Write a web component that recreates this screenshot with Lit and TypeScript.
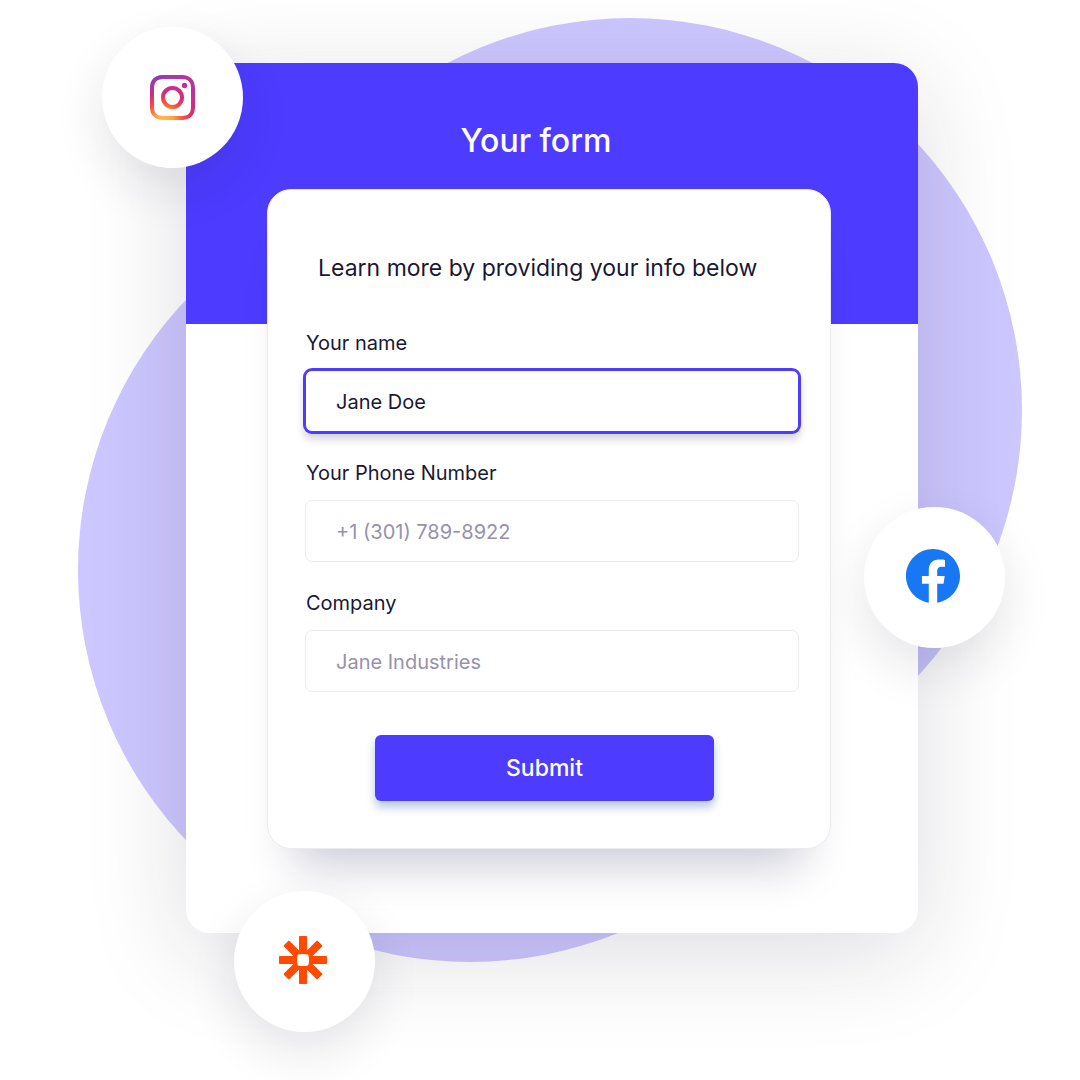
import { LitElement, html, css, svg } from "lit";
import { customElement, property } from "lit/decorators.js";
import { classMap } from "lit/directives/class-map.js";

interface Field {
  id: string;
  label: string;
  type: string;
  value: string;
  placeholder: string;
  active: boolean;
}

const FIELDS: Field[] = [
  { id: "name", label: "Your name", type: "text", value: "Jane Doe", placeholder: "", active: true },
  { id: "phone", label: "Your Phone Number", type: "tel", value: "", placeholder: "+1 (301) 789-8922", active: false },
  { id: "company", label: "Company", type: "text", value: "", placeholder: "Jane Industries", active: false },
];

const instagram = svg`
  <svg width="45" height="45" viewBox="0 0 45 45" aria-hidden="true">
    <defs>
      <radialGradient id="warm" gradientUnits="userSpaceOnUse" cx="14" cy="47" r="47">
        <stop offset="0" stop-color="#ffc04c"></stop>
        <stop offset="0.2" stop-color="#ffa545"></stop>
        <stop offset="0.42" stop-color="#f4503f"></stop>
        <stop offset="0.62" stop-color="#dc2b72"></stop>
        <stop offset="1" stop-color="#b434a4"></stop>
      </radialGradient>
      <radialGradient id="cool" gradientUnits="userSpaceOnUse" cx="4" cy="-3" r="28">
        <stop offset="0" stop-color="#7a43b8"></stop>
        <stop offset="1" stop-color="#9a3ab4" stop-opacity="0"></stop>
      </radialGradient>
      <g id="camera">
        <path fill-rule="evenodd" d="M13 0H32C40 0 45 5 45 13V32C45 40 40 45 32 45H13C5 45 0 40 0 32V13C0 5 5 0 13 0ZM13 4C7 4 4 7 4 13V32C4 38 7 41 13 41H32C38 41 41 38 41 32V13C41 7 38 4 32 4Z"></path>
        <path fill-rule="evenodd" d="M22.500 11a11.500 11.500 0 1 0 0 23a11.500 11.500 0 0 0 0-23ZM22.500 15a7.500 7.500 0 1 1 0 15a7.500 7.500 0 0 1 0-15Z"></path>
        <circle cx="34.500" cy="10.500" r="2.700"></circle>
      </g>
    </defs>
    <use href="#camera" fill="url(#warm)"></use>
    <use href="#camera" fill="url(#cool)"></use>
  </svg>`;

const facebook = svg`
  <svg width="54" height="54" viewBox="0 0 24 24" aria-hidden="true">
    <path fill="#1877f2" d="M24 12c0-6.627-5.373-12-12-12S0 5.373 0 12c0 5.990 4.388 10.954 10.125 11.854v-8.385H7.078v-3.470h3.047V9.356c0-3.007 1.792-4.669 4.533-4.669 1.312 0 2.686.235 2.686.235v2.953H15.830c-1.491 0-1.956.925-1.956 1.874v2.250h3.328l-.532 3.470h-2.796v8.385C19.612 22.954 24 17.990 24 12z"></path>
  </svg>`;

const zapier = svg`
  <svg width="48" height="48" viewBox="0 0 48 48" aria-hidden="true">
    <g fill="#ff4a00">
      <rect x="20" y="0" width="8" height="48" rx="1"></rect>
      <rect x="0" y="20" width="48" height="8" rx="1"></rect>
      <rect x="20" y="0" width="8" height="48" rx="1" transform="rotate(45 24 24)"></rect>
      <rect x="20" y="0" width="8" height="48" rx="1" transform="rotate(-45 24 24)"></rect>
    </g>
    <path fill="#fff" d="M24 18c2 0 3.600.200 4.800.600.300 0 .500.300.600.600.400 1.200.600 2.800.600 4.800s-.200 3.600-.600 4.800c-.100.300-.300.500-.600.600-1.200.400-2.800.600-4.800.600s-3.600-.200-4.800-.600c-.300-.100-.500-.300-.600-.600-.400-1.200-.600-2.800-.600-4.800s.200-3.600.600-4.800c.100-.300.300-.500.600-.600 1.200-.400 2.800-.600 4.800-.600z"></path>
  </svg>`;

@customElement("form-field")
class FormField extends LitElement {
  @property({ attribute: false }) field!: Field;

  static styles = css`
    :host {
      display: block;
    }
    .field {
      display: flex;
      flex-direction: column;
      gap: 13px;
    }
    .label {
      padding-left: 1px;
      font-size: 20px;
      line-height: 28px;
      color: #1b1833;
    }
    .input {
      box-sizing: border-box;
      width: 100%;
      height: 62px;
      padding: 2px 30px 0;
      border: 1px solid #ececee;
      border-radius: 7px;
      outline: none;
      background: #fff;
      font: inherit;
      font-size: 20px;
      color: #1b1833;
    }
    .input::placeholder {
      color: #9692ac;
      opacity: 1;
    }
    .active {
      border-color: #4d3bff;
      box-shadow: 0 0 0 2px #4d3bff, 0 6px 8px 1px rgba(27, 24, 80, 0.2);
    }
  `;

  render() {
    const f = this.field;
    return html`
      <div class="field">
        <label class="label" for=${f.id}>${f.label}</label>
        <input
          class=${classMap({ input: true, active: f.active })}
          id=${f.id}
          type=${f.type}
          .value=${f.value}
          placeholder=${f.placeholder}
        />
      </div>
    `;
  }
}

@customElement("app-root")
class AppRoot extends LitElement {
  static styles = css`
    :host {
      display: block;
      font-family: Inter, "Liberation Sans", sans-serif;
      font-weight: 400;
    }
    .scene {
      box-sizing: border-box;
      display: flex;
      justify-content: center;
      min-height: 100vh;
      padding: 63px 0 147px 24px;
      overflow: hidden;
      background: #fff;
    }
    .stage {
      position: relative;
      isolation: isolate;
      width: 100%;
      max-width: 732px;
    }
    .disc {
      position: absolute;
      z-index: -1;
      width: 784px;
      height: 784px;
      border-radius: 50%;
      background: #cdc7ff;
    }
    .disc-upper {
      top: -45px;
      right: -104px;
    }
    .disc-lower {
      top: 115px;
      left: -108px;
    }
    .panel {
      box-sizing: border-box;
      padding: 56px 87px 84px 81px;
      border-radius: 24px;
      background: linear-gradient(#4d3bff 261px, #fff 261px);
      box-shadow: 0 20px 100px rgba(27, 24, 51, 0.15);
    }
    .title {
      margin: 0 0 26px;
      padding-right: 26px;
      font-size: 32px;
      font-weight: 500;
      line-height: 44px;
      text-align: center;
      color: #fff;
    }
    .card {
      display: flex;
      flex-direction: column;
      padding: 62px 31px 47px 37px;
      border: 1px solid #ececee;
      border-radius: 24px;
      background: #fff;
      box-shadow: 0 42px 44px -28px rgba(27, 24, 80, 0.24);
    }
    .intro {
      margin: 0 0 45px;
      padding-left: 13px;
      font-size: 23px;
      line-height: 32px;
      color: #1b1833;
    }
    .fields {
      display: flex;
      flex-direction: column;
      gap: 27px;
    }
    .submit {
      margin: 43px 85px 0 70px;
      height: 66px;
      border: 0;
      border-radius: 6px;
      background: #4d3bff;
      box-shadow: 0 6px 10px rgba(20, 80, 170, 0.32);
      font: inherit;
      font-size: 23px;
      font-weight: 500;
      color: #fff;
      cursor: pointer;
    }
    .badge {
      position: absolute;
      display: flex;
      align-items: center;
      justify-content: center;
      box-sizing: border-box;
      width: 141px;
      height: 141px;
      border-radius: 50%;
      background: #fff;
      box-shadow: 0 20px 50px rgba(27, 24, 51, 0.11);
    }
    .instagram {
      top: -36px;
      left: -84px;
    }
    .facebook {
      top: 444px;
      right: -87px;
      padding: 0 3px 3px 0;
    }
    .zapier {
      bottom: -99px;
      left: 48px;
      padding: 0 3px 3px 0;
    }
  `;

  render() {
    return html`
      <main class="scene">
        <div class="stage">
          <div class="disc disc-upper"></div>
          <div class="disc disc-lower"></div>
          <section class="panel">
            <h1 class="title">Your form</h1>
            <form class="card" @submit=${(e: Event) => e.preventDefault()}>
              <p class="intro">Learn more by providing your info below</p>
              <div class="fields">
                ${FIELDS.map((f) => html`<form-field .field=${f}></form-field>`)}
              </div>
              <button class="submit" type="submit">Submit</button>
            </form>
          </section>
          <a class="badge instagram" href="#instagram" aria-label="Instagram">${instagram}</a>
          <a class="badge facebook" href="#facebook" aria-label="Facebook">${facebook}</a>
          <a class="badge zapier" href="#zapier" aria-label="Zapier">${zapier}</a>
        </div>
      </main>
    `;
  }
}
